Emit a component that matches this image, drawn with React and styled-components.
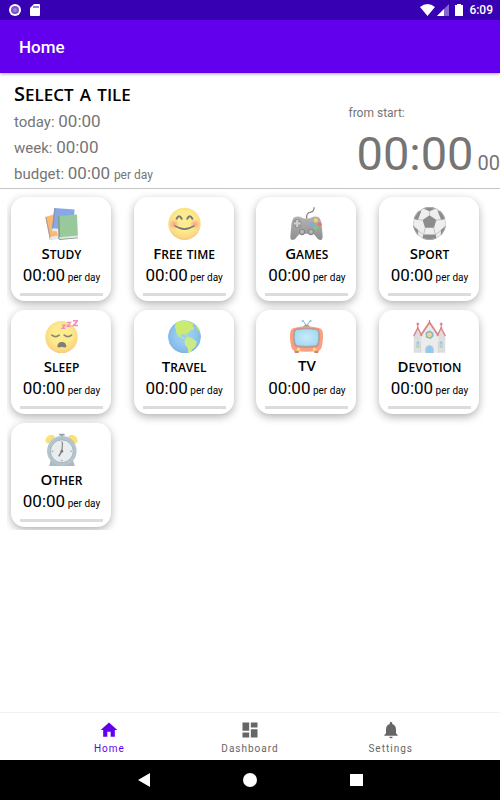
import React from "react";
import styled, { createGlobalStyle } from "styled-components";
import { MdHome, MdDashboard, MdNotifications } from "react-icons/md";

const StudyIcon = () => (
  <svg viewBox="0 0 96 96" aria-hidden="true">
    <path d="M1 29 25 22 40 92 15 95z" fill="#fdb774" />
    <path d="M1 29 4 28 18 94 14 95z" fill="#a8a29c" />
    <path d="M15 87 40 82 42 92 15 95z" fill="#e9e9e9" />
    <path d="M27 3 86 7 82 70 20 67z" fill="#86a8e6" />
    <path d="M27 3 30 4 24 67 20 67z" fill="#8b95ab" />
    <path d="M22 62 50 64 48 72 20 70z" fill="#ececec" />
    <path d="M38 26 93 22 96 88 41 94z" fill="#97c99b" />
    <path d="M38 26 42 25 44 92 39 94z" fill="#83998a" />
    <path d="M42 88 96 83 96 90 42 95z" fill="#e6e6e6" />
    <path d="M41 93 96 89 96 91 41 96z" fill="#8a9b8c" />
  </svg>
);

const FaceGradient = ({ id }) => (
  <radialGradient id={id} cx="50%" cy="42%" r="58%">
    <stop offset="0.5" stopColor="#fdec8d" />
    <stop offset="0.85" stopColor="#fbd983" />
    <stop offset="1" stopColor="#f7c583" />
  </radialGradient>
);

const SmileIcon = () => (
  <svg viewBox="0 0 96 96" aria-hidden="true">
    <defs>
      <FaceGradient id="smile-face" />
      <radialGradient id="smile-cheek">
        <stop offset="0" stopColor="#f7a08a" />
        <stop offset="1" stopColor="#f7a08a" stopOpacity="0" />
      </radialGradient>
    </defs>
    <circle cx="48" cy="49" r="47" fill="url(#smile-face)" />
    <circle cx="18" cy="50" r="15" fill="url(#smile-cheek)" />
    <circle cx="78" cy="50" r="15" fill="url(#smile-cheek)" />
    <g fill="none" stroke="#777a7a" strokeLinecap="round">
      <path d="M25 34q7-14 15 0M56 34q7-14 15 0" strokeWidth="6" />
      <path d="M20 55q28 17 56 0" strokeWidth="4" />
    </g>
    <path d="M20 55q28 15 56 0-28 24-56 0z" fill="#777a7a" />
  </svg>
);

const GamepadIcon = () => (
  <svg viewBox="0 0 96 96" aria-hidden="true">
    <defs>
      <linearGradient id="pad-body" x1="0" y1="0" x2="0" y2="1">
        <stop offset="0" stopColor="#b4b4b4" />
        <stop offset="1" stopColor="#8f8f8f" />
      </linearGradient>
    </defs>
    <path d="M49 34c-3-15 5-18 12-19 7-1 9-6 9-14" fill="none" stroke="#8a8a8a" strokeWidth="4" />
    <path
      d="M11 31q12-7 24 0 12 5 26 0 14-7 24 0 4 3 7 20l3 33q0 13-8 12-6 0-10-8l-9-10H28l-9 10q-4 8-11 8-8 0-7-12l3-33q3-17 7-20z"
      fill="url(#pad-body)"
    />
    <circle cx="21" cy="48" r="13" fill="#969696" />
    <path d="M21 38v20M11 48h20" stroke="#d0d0d0" strokeWidth="6" />
    <circle cx="35" cy="73" r="9" fill="#858585" />
    <circle cx="61" cy="73" r="9" fill="#858585" />
    <circle cx="35" cy="72" r="6" fill="#b8b8b8" />
    <circle cx="61" cy="72" r="6" fill="#b8b8b8" />
    <circle cx="75" cy="39" r="6" fill="#fbcf58" />
    <circle cx="64" cy="50" r="6" fill="#72b1ee" />
    <circle cx="86" cy="50" r="6" fill="#f27366" />
    <circle cx="75" cy="61" r="6" fill="#75cb83" />
  </svg>
);

const BallIcon = () => (
  <svg viewBox="0 0 96 96" aria-hidden="true">
    <defs>
      <clipPath id="ball-clip">
        <circle cx="48" cy="48" r="48" />
      </clipPath>
    </defs>
    <g clipPath="url(#ball-clip)">
      <circle cx="48" cy="48" r="48" fill="#eeeeee" />
      <g fill="#8c8c8c">
        <path d="M48 24 68 38 61 60H35L28 38z" />
        <path d="M26 3 48 12 70 3 60-6H36zM-2 34 14 38 24 12 10 8-4 26zM98 34 82 38 72 12 86 8 100 26z" />
        <path d="M-2 52 15 67 15 88-4 84zM98 52 81 67 81 88 100 84zM30 80H66L70 99H26z" />
      </g>
      <g fill="none" stroke="#b0b0b0" strokeWidth="2">
        <path d="M48 11v15M30 39 14 36M66 39 82 36M36 59 31 81M60 59 65 81M14 68 31 81M82 68 65 81M22 12 28 3M74 12 68 3" />
      </g>
      <circle cx="48" cy="48" r="47" fill="none" stroke="#bdbdbd" strokeWidth="2" />
    </g>
  </svg>
);

const SleepIcon = () => (
  <svg viewBox="0 0 96 96" aria-hidden="true">
    <defs>
      <FaceGradient id="sleep-face" />
    </defs>
    <circle cx="48" cy="50" r="47" fill="url(#sleep-face)" />
    <g fill="none" stroke="#8a8275" strokeWidth="5" strokeLinecap="round">
      <path d="M20 44q11 9 21 0M56 44q11 9 21 0" />
    </g>
    <path d="M36 78q0-14 13-14t13 14q-3 4-13 0-10 4-13 0z" fill="#817d76" />
    <g fill="none" stroke="#ee8fbc" strokeWidth="4">
      <path d="M49 15h9l-8 9h9M64 7h10l-9 11h10" />
      <path d="M81 2h14l-12 14h14" strokeWidth="5" />
    </g>
  </svg>
);

const GlobeIcon = () => (
  <svg viewBox="0 0 96 96" aria-hidden="true">
    <defs>
      <radialGradient id="sea" cx="50%" cy="45%" r="55%">
        <stop offset="0.4" stopColor="#99cdf4" />
        <stop offset="1" stopColor="#80b6e4" />
      </radialGradient>
      <clipPath id="globe-clip">
        <circle cx="48" cy="49" r="48" />
      </clipPath>
    </defs>
    <g clipPath="url(#globe-clip)">
      <circle cx="48" cy="49" r="48" fill="url(#sea)" />
      <path
        d="M22 7 40 0 62 4 76 12 70 17 76 22 74 30 66 28 62 36 55 39 52 45 46 41 37 43 38 49 46 50 49 55 43 54 31 48 25 39 23 28 20 20z"
        fill="#cbea72"
      />
      <path d="M50 52 61 50 72 54 84 63 80 77 70 86 64 97 58 98 58 83 50 73 48 63z" fill="#cbea88" />
      <path d="M49 45 60 46 62 49 54 47z" fill="#cbea88" />
      <path d="M84 13 90 20 96 34 91 36 85 28 79 19z" fill="#b5dc7d" />
    </g>
  </svg>
);

const TvIcon = () => (
  <svg viewBox="0 0 96 96" aria-hidden="true">
    <defs>
      <radialGradient id="screen">
        <stop offset="0" stopColor="#caebfa" />
        <stop offset="1" stopColor="#a6daf4" />
      </radialGradient>
    </defs>
    <path d="M48 17 38 2M48 17 59 2" stroke="#8fbed3" strokeWidth="3" />
    <circle cx="37" cy="3" r="3" fill="#83c5e5" />
    <circle cx="60" cy="3" r="3" fill="#83c5e5" />
    <path d="M36 20q12-12 24 0z" fill="#86a5af" />
    <path d="M12 86h16l-3 10H14zM68 86h16l-2 10H71z" fill="#c98372" />
    <path d="M11 23q37-9 74 0 8 2 10 12 3 15-2 40-2 13-11 15-35 4-68 0-9-2-11-15-5-25-2-40 2-10 10-12z" fill="#f9a083" />
    <path d="M18 25q30-5 60 0 7 2 8 10 2 17-1 33-2 10-9 11-29 3-56 0-7-1-9-11-3-16-1-33 1-8 8-10z" fill="#dc8d78" />
    <path d="M19 28q29-5 58 0 5 2 6 9 2 14-1 28-2 9-8 10-27 3-52 0-6-1-8-10-3-14-1-28 1-7 6-9z" fill="url(#screen)" stroke="#8ba5ad" strokeWidth="2" />
    <circle cx="25" cy="85" r="5" fill="#fbdc78" />
    <circle cx="71" cy="85" r="5" fill="#fbdc78" />
  </svg>
);

const ChurchIcon = () => (
  <svg viewBox="0 0 96 96" aria-hidden="true">
    <path d="M2 45 14 26 26 45v50H2zM70 45 82 26 94 45v50H70z" fill="#dedede" />
    <path d="M22 43 48 8 74 43v52H22z" fill="#ececec" />
    <path d="M22 62v33M74 62v33" stroke="#cfcfcf" strokeWidth="2" />
    <g fill="none" stroke="#dc8585" strokeWidth="5">
      <path d="M22 46 48 7 74 46" />
      <path d="M2 47 14 23 26 47M70 47 82 23 94 47" strokeWidth="4" />
    </g>
    <path d="M48 0v10M14 7v18M10 12h8M82 7v18M78 12h8" stroke="#cf7676" strokeWidth="3" />
    <circle cx="48" cy="43" r="9" fill="#f7e48d" stroke="#93a9d8" strokeWidth="4" />
    <circle cx="48" cy="43" r="11" fill="none" stroke="#7fcdbb" strokeWidth="3" strokeDasharray="6 6" />
    <circle cx="48" cy="43" r="5" fill="#f7d57a" />
    <path d="M10 80V66q4-8 8 0v14zM78 80V66q4-8 8 0v14z" fill="#90c8dd" />
    <path d="M12 77V68h4v9zM80 77V68h4v9z" fill="#f4dd80" />
    <path d="M37 96V83q2-9 11-9t11 9v13z" fill="#8fcdf1" stroke="#c2c2c2" strokeWidth="2" />
    <path d="M48 76v20" stroke="#77b7dd" strokeWidth="1" />
  </svg>
);

const ClockIcon = () => (
  <svg viewBox="0 0 96 96" aria-hidden="true">
    <path d="M41 2h16v5h-5v9h-6V7h-5z" fill="#97a2a8" />
    <path d="M1 24Q2 6 20 5q8 1 8 6L9 30q-7 0-8-6zM95 24Q94 6 76 5q-8 1-8 6l19 19q7 0 8-6z" fill="#fbe276" />
    <path d="M8 30 28 11M88 30 68 11" stroke="#c7b984" strokeWidth="2" />
    <path d="M17 78h64l6 19H12z" fill="#a9bac3" />
    <circle cx="49" cy="52" r="43" fill="#b4c4cc" />
    <circle cx="49" cy="53" r="33" fill="#e9edef" stroke="#96a7b0" strokeWidth="2" />
    <path d="M49 24v4M49 78v4M20 53h4M74 53h4" stroke="#8d8d8d" strokeWidth="3" />
    <path d="M49 53 40 68" stroke="#777" strokeWidth="4" />
    <path d="M49 53 51 28" stroke="#777" strokeWidth="3" />
    <circle cx="49" cy="53" r="4" fill="#777" />
  </svg>
);

const tiles = [
  { name: "Study", Icon: StudyIcon },
  { name: "Free time", Icon: SmileIcon },
  { name: "Games", Icon: GamepadIcon },
  { name: "Sport", Icon: BallIcon },
  { name: "Sleep", Icon: SleepIcon },
  { name: "Travel", Icon: GlobeIcon },
  { name: "TV", Icon: TvIcon, acronym: true },
  { name: "Devotion", Icon: ChurchIcon },
  { name: "Other", Icon: ClockIcon },
];

const tabs = [
  { name: "Home", Icon: MdHome, active: true },
  { name: "Dashboard", Icon: MdDashboard },
  { name: "Settings", Icon: MdNotifications },
];

function StatusBar() {
  return (
    <Status>
      <svg width="12" height="12" viewBox="0 0 12 12" aria-hidden="true">
        <circle cx="6" cy="6" r="6" fill="#fff" />
        <circle cx="6" cy="6" r="4" fill="#7a52c7" />
        <circle cx="6" cy="6" r="2" fill="#9a80d5" />
      </svg>
      <svg width="10" height="12" viewBox="0 0 10 12" aria-hidden="true">
        <path d="M4 0h5q1 0 1 1v10q0 1-1 1H1q-1 0-1-1V4z" fill="#fff" />
        <path d="M4 2v2M6 2v2M8 2v2" stroke="#3700b3" strokeWidth="1" />
      </svg>
      <StatusRight>
        <svg width="43" height="12" viewBox="0 0 43 12" aria-hidden="true">
          <path d="M0 3q7.500-6 15 0L7.500 12z" fill="#fff" />
          <path d="M29 0v12H17z" fill="#8766d1" />
          <path d="M24 5v7h-7z" fill="#fff" />
          <path d="M37 0h4v1h2v11h-8V1h2z" fill="#fff" />
        </svg>
        <span>6:09</span>
      </StatusRight>
    </Status>
  );
}

function App() {
  return (
    <Screen>
      <GlobalStyle />
      <StatusBar />
      <AppBar>
        <h1>Home</h1>
      </AppBar>

      <Summary>
        <Totals>
          <Heading>Select a tile</Heading>
          <Total>
            today: <Time>00:00</Time>
          </Total>
          <Total>
            week: <Time>00:00</Time>
          </Total>
          <Total>
            budget: <Time>00:00</Time> <small>per day</small>
          </Total>
        </Totals>
        <Timer>
          <TimerLabel>from start:</TimerLabel>
          <TimerValue>
            <span>00:00</span> <small>00</small>
          </TimerValue>
        </Timer>
      </Summary>

      <Tiles>
        {tiles.map(({ name, Icon, acronym }) => (
          <Tile key={name} type="button">
            <Icon />
            <TileName $acronym={acronym}>{name}</TileName>
            <TileTime>
              <Time>00:00</Time> per day
            </TileTime>
            <Progress />
          </Tile>
        ))}
      </Tiles>

      <Tabs>
        {tabs.map(({ name, Icon, active }) => (
          <Tab key={name} href="#" $active={active}>
            <Icon size={20} />
            {name}
          </Tab>
        ))}
      </Tabs>

      <SystemBar>
        <SystemButton type="button" aria-label="Back">
          <svg width="14" height="14" viewBox="0 0 14 14">
            <path d="M1 7 13 0v14z" />
          </svg>
        </SystemButton>
        <SystemButton type="button" aria-label="Home screen">
          <svg width="14" height="14" viewBox="0 0 14 14">
            <circle cx="7" cy="7" r="7" />
          </svg>
        </SystemButton>
        <SystemButton type="button" aria-label="Recent apps">
          <svg width="14" height="14" viewBox="0 0 14 14">
            <path d="M1 1h13v12H1z" />
          </svg>
        </SystemButton>
      </SystemBar>
    </Screen>
  );
}

export default App;

const GlobalStyle = createGlobalStyle`
  * {
    box-sizing: border-box;
  }
  body {
    margin: 0;
    font-family: Roboto, sans-serif;
    background: #fff;
  }
  h1, h2, p {
    margin: 0;
  }
  button {
    padding: 0;
    border: 0;
    background: none;
    font-family: inherit;
  }
`;

const Screen = styled.div`
  min-height: 100vh;
  display: flex;
  flex-direction: column;
`;

const Status = styled.div`
  height: 20px;
  padding: 0 7px 0 9px;
  display: flex;
  align-items: center;
  gap: 9px;
  background: #3700b3;
`;

const StatusRight = styled.div`
  margin-left: auto;
  display: flex;
  align-items: center;
  gap: 6px;
  color: #fff;
  font-size: 12px;
  font-weight: 500;
  line-height: 20px;
`;

const AppBar = styled.header`
  height: 53px;
  padding: 0 19px;
  display: flex;
  align-items: center;
  position: relative;
  background: #6200ee;
  box-shadow: 0 1px 3px rgba(0, 0, 0, 0.35);

  h1 {
    color: #fff;
    font-size: 17px;
    font-weight: 500;
  }
`;

const Summary = styled.section`
  padding: 8px 0 1px 14px;
  display: flex;
  justify-content: space-between;
  color: #757575;
  border-bottom: 1px solid #c4c4c4;
`;

const Totals = styled.div`
  display: flex;
  flex-direction: column;
`;

/* small capitals a little taller than the usual synthesised ones */
const Heading = styled.h2`
  height: 28px;
  color: #000;
  font-family: "Open Sans", sans-serif;
  font-size: 24px;
  font-weight: 600;
  font-variant: small-caps;
  line-height: 22px;

  &::first-letter {
    font-size: 20px;
  }
`;

const Time = styled.span`
  font-size: 17px;
  line-height: 1;
`;

const Total = styled.p`
  height: 26px;
  font-size: 15px;
  line-height: 27px;

  small {
    font-size: 12px;
    line-height: 1;
  }
`;

const Timer = styled.div`
  padding-top: 24px;
`;

const TimerLabel = styled.p`
  font-size: 12px;
  line-height: 16px;
`;

const TimerValue = styled.p`
  padding-left: 8px;
  display: flex;
  align-items: baseline;
  gap: 4px;
  font-size: 47px;
  line-height: 66px;
  white-space: nowrap;

  small {
    font-size: 20px;
    line-height: 1;
  }
`;

const Tiles = styled.main`
  margin: 0 7px;
  padding: 8px 14px 3px 4px;
  display: grid;
  grid-template-columns: repeat(4, 100px);
  justify-content: space-between;
  row-gap: 9px;
  overflow: hidden;
`;

const Tile = styled.button`
  height: 104px;
  padding: 10px 8px 5px 9px;
  display: flex;
  flex-direction: column;
  align-items: center;
  color: #000;
  background: #fff;
  border-radius: 14px;
  box-shadow: 0 3px 8px rgba(0, 0, 0, 0.3);

  svg {
    width: 33px;
    height: 33px;
    flex: none;
  }
`;

const TileName = styled.span`
  display: block;
  height: 24px;
  font-family: "Open Sans", sans-serif;
  font-size: ${({ $acronym }) => ($acronym ? "15px" : "17px")};
  font-weight: 600;
  font-variant: small-caps;
  line-height: 25px;
  white-space: nowrap;

  &::first-letter {
    font-size: 15px;
  }
`;

const TileTime = styled.span`
  height: 22px;
  font-size: 10px;
  line-height: 28px;
  white-space: nowrap;
`;

const Progress = styled.span`
  width: 100%;
  height: 3px;
  margin-top: auto;
  background: #dcdcdc;
`;

const Tabs = styled.nav`
  margin-top: auto;
  padding: 0 39px;
  display: flex;
  border-top: 1px solid #f2f2f2;
`;

const Tab = styled.a`
  flex: 1;
  height: 47px;
  padding-top: 7px;
  display: flex;
  flex-direction: column;
  align-items: center;
  gap: 2px;
  color: ${({ $active }) => ($active ? "#6200ee" : "#666")};
  font-size: 10px;
  line-height: 14px;
  letter-spacing: 1px;
  text-decoration: none;
`;

const SystemBar = styled.footer`
  height: 40px;
  padding: 0 91px;
  display: flex;
  background: #000;
`;

const SystemButton = styled.button`
  flex: 1;
  display: flex;
  align-items: center;
  justify-content: center;

  svg {
    fill: #fff;
  }
`;
